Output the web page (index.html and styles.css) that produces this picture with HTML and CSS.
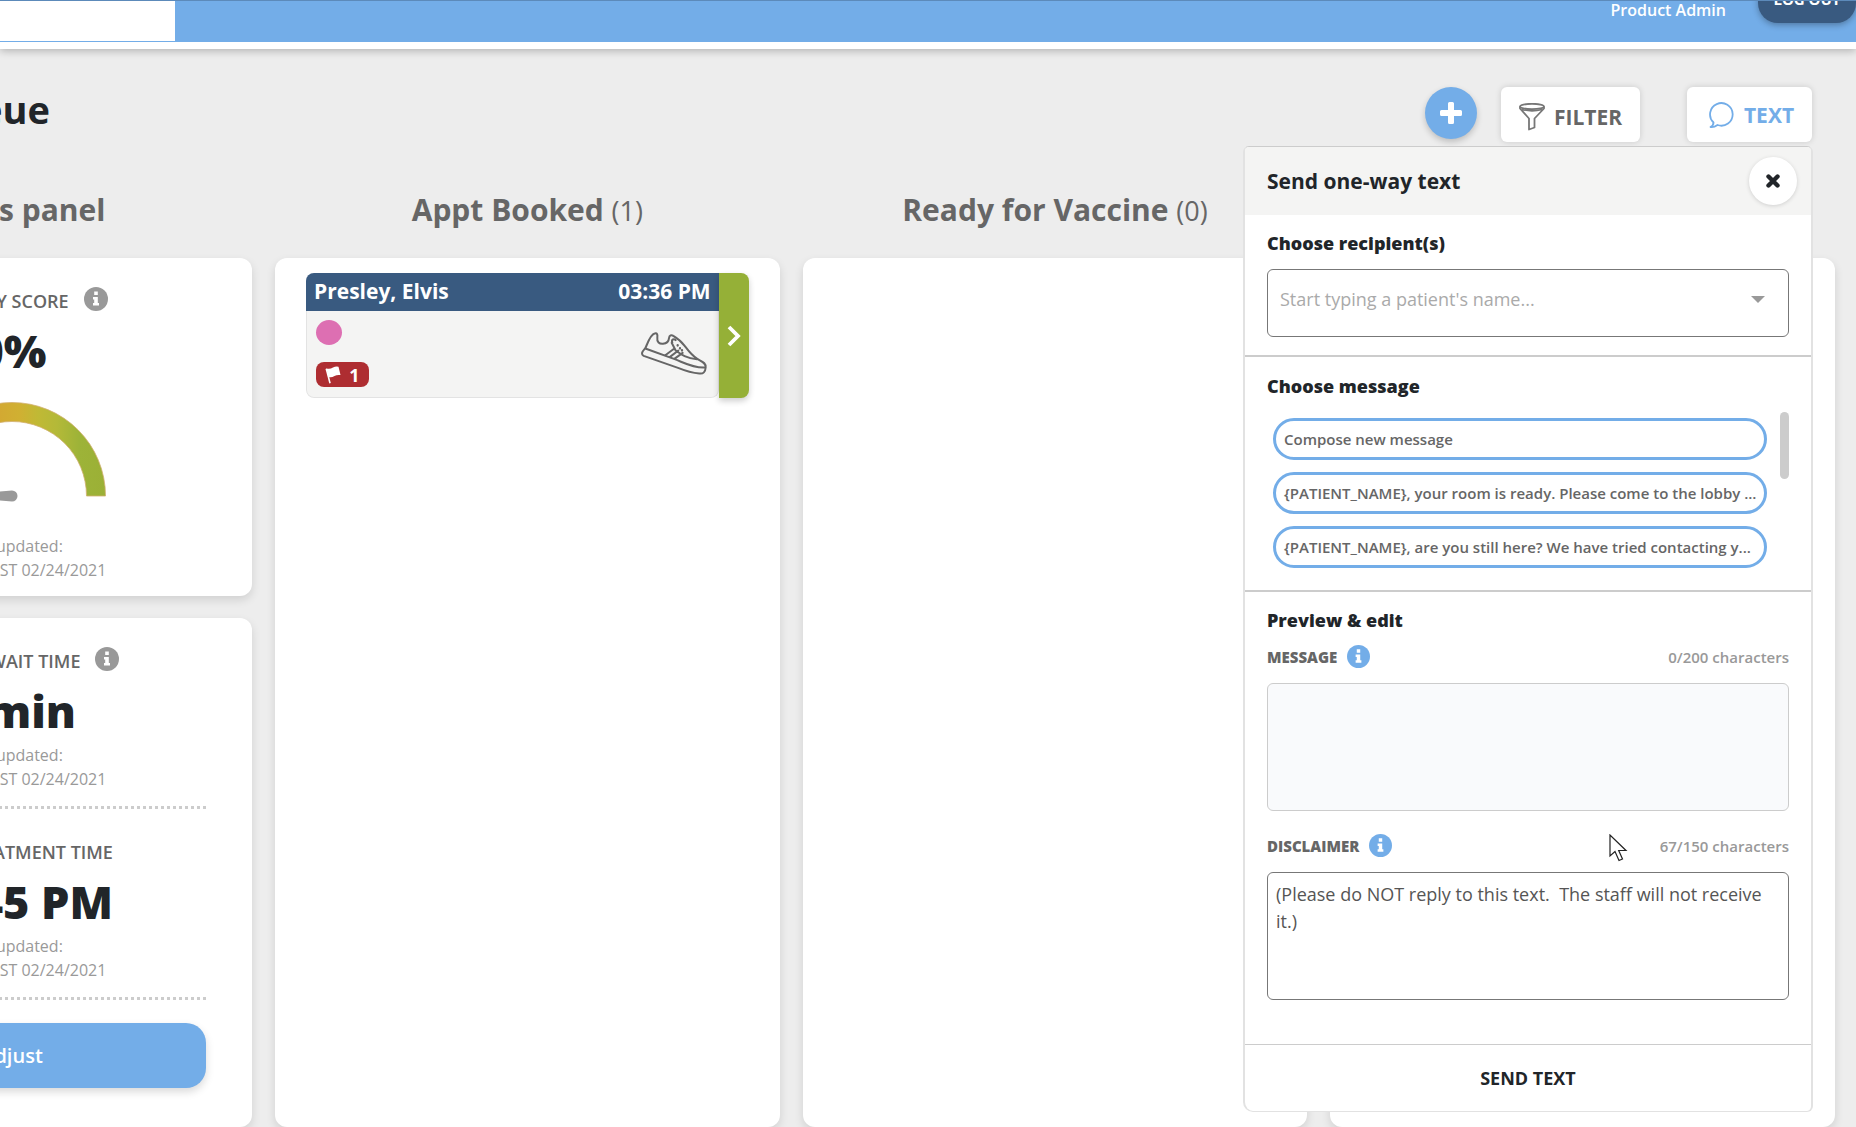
FILE: index.html
```html
<!DOCTYPE html>
<html lang="en">
<head>
	<meta charset="UTF-8">
	<meta name="viewport" content="width=device-width, initial-scale=1.0">
	<title>Queue</title>
	<link rel="stylesheet" href="styles.css">
</head>
<body>
	<header class="header">
		<div class="header-bar">
			<div class="header-logo"></div>
			<span class="header-user">Product Admin</span>
			<button type="button" class="btn-logout">LOG OUT</button>
		</div>
	</header>

	<main class="main">
		<div class="toolbar">
			<h1 class="page-title">Queue</h1>
			<button type="button" class="btn-add" aria-label="Add">
				<svg width="22" height="22" viewBox="0 0 22 22"><path d="M8 1.5Q8 0 9.500 0H12.500Q14 0 14 1.500V8H20.500Q22 8 22 9.500V12.500Q22 14 20.500 14H14V20.500Q14 22 12.500 22H9.500Q8 22 8 20.500V14H1.500Q0 14 0 12.500V9.500Q0 8 1.500 8H8Z" fill="#fff"/></svg>
			</button>
			<button type="button" class="btn-tool btn-filter">
				<svg width="26" height="28" viewBox="0 0 26 28" fill="none" stroke="#777" stroke-width="1.800" stroke-linejoin="round"><ellipse cx="13" cy="3.500" rx="12" ry="2.700"/><path d="M1 3.500V5.500L10 15.500V26.500L15.500 24.500V15.500L25 5.500V3.500M3 6.500Q13 9 23 6.500"/></svg>
				FILTER
			</button>
			<div class="text-wrap">
				<button type="button" class="btn-tool btn-text">
					<svg width="25" height="26" viewBox="0 0 25 26" fill="none" stroke="#73ade8" stroke-width="1.800" stroke-linejoin="round"><path d="M4.500 20.500A11.300 11.300 0 1 1 8.500 23Q5 25.500 1.500 25Q4.500 23.500 4.500 20.500Z"/></svg>
					TEXT
				</button>

				<form class="popup">
					<div class="popup-header">
						<h2 class="popup-title">Send one-way text</h2>
						<button type="button" class="btn-close" aria-label="Close">
							<svg width="14" height="14" viewBox="0 0 14 14"><path d="M2.500 2.500L11.500 11.500M11.500 2.500L2.500 11.500" stroke="#212529" stroke-width="4.400" stroke-linecap="round"/></svg>
						</button>
					</div>
					<div class="popup-section section-recipient">
						<label class="popup-subtitle" for="recipient">Choose recipient(s)</label>
						<div class="select-box">
							<input type="text" class="input-recipient" id="recipient" placeholder="Start typing a patient's name...">
							<svg width="14" height="7" viewBox="0 0 14 7"><path d="M0 0H14L7 7Z" fill="#999"/></svg>
						</div>
					</div>
					<div class="popup-section section-message">
						<h3 class="popup-subtitle">Choose message</h3>
						<div class="message-wrap">
							<ul class="list-message">
								<li><button type="button" class="btn-message">Compose new message</button></li>
								<li><button type="button" class="btn-message">{PATIENT_NAME}, your room is ready. Please come to the lobby ...</button></li>
								<li><button type="button" class="btn-message">{PATIENT_NAME}, are you still here? We have tried contacting y...</button></li>
							</ul>
							<div class="scroll-thumb"></div>
						</div>
					</div>
					<div class="popup-section section-edit">
						<h3 class="popup-subtitle">Preview &amp; edit</h3>
						<div class="field-head">
							<label for="message">MESSAGE</label>
							<svg class="icon-info blue" viewBox="0 0 24 24"><circle cx="12" cy="12" r="12"/><path d="M10.200 4.500H13.800V8H10.200ZM9 10H13.800V16H15V18.500H9V16H10.200V12.500H9Z" fill="#fff"/></svg>
							<span class="count">0/200 characters</span>
						</div>
						<textarea class="text-area" id="message" disabled></textarea>
						<div class="field-head">
							<label for="disclaimer">DISCLAIMER</label>
							<svg class="icon-info blue" viewBox="0 0 24 24"><circle cx="12" cy="12" r="12"/><path d="M10.200 4.500H13.800V8H10.200ZM9 10H13.800V16H15V18.500H9V16H10.200V12.500H9Z" fill="#fff"/></svg>
							<span class="count">67/150 characters</span>
						</div>
						<textarea class="text-area" id="disclaimer">(Please do NOT reply to this text.  The staff will not receive it.)</textarea>
					</div>
					<button type="button" class="btn-send">SEND TEXT</button>
					<svg class="cursor" width="20" height="30" viewBox="0 0 20 30"><path d="M1 1V22L6 17.500L10 26.500L13.500 25L9.700 16.500H17Z" fill="#fff" stroke="#222" stroke-width="1.200"/></svg>
				</form>
			</div>
		</div>

		<div class="board">
			<section class="column">
				<h2 class="column-title">Status panel</h2>
				<div class="box box-score">
					<div class="label">RECOVERY SCORE
						<svg class="icon-info" viewBox="0 0 24 24"><circle cx="12" cy="12" r="12"/><path d="M10.200 4.500H13.800V8H10.200ZM9 10H13.800V16H15V18.500H9V16H10.200V12.500H9Z" fill="#fff"/></svg>
					</div>
					<div class="value">0%</div>
					<svg class="gauge" width="188" height="102" viewBox="0 0 188 102">
						<defs>
							<linearGradient id="gauge-fill">
								<stop offset="0" stop-color="#ae2d31"/>
								<stop offset=".42" stop-color="#d3a832"/>
								<stop offset=".54" stop-color="#d0b032"/>
								<stop offset=".64" stop-color="#c0b935"/>
								<stop offset=".74" stop-color="#b4b938"/>
								<stop offset=".86" stop-color="#9db338"/>
								<stop offset="1" stop-color="#9bb036"/>
							</linearGradient>
						</defs>
						<path d="M.500 94A93.500 93.500 0 0 1 187.500 94H168.500A74.500 74.500 0 0 0 19.500 94Z" fill="url(#gauge-fill)" stroke="#d2b070" stroke-width=".800"/>
						<path d="M30 94L94 88.500A5.500 5.500 0 0 1 94 99.500Z" fill="#999"/>
					</svg>
					<p class="updated">Last updated:<br>03:36 PM EST 02/24/2021</p>
				</div>
				<div class="box box-time">
					<div class="label">AVERAGE WAIT TIME
						<svg class="icon-info" viewBox="0 0 24 24"><circle cx="12" cy="12" r="12"/><path d="M10.200 4.500H13.800V8H10.200ZM9 10H13.800V16H15V18.500H9V16H10.200V12.500H9Z" fill="#fff"/></svg>
					</div>
					<div class="value">0 min</div>
					<p class="updated">Last updated:<br>03:36 PM EST 02/24/2021</p>
					<div class="dots"></div>
					<div class="label">NEXT TREATMENT TIME</div>
					<div class="value">03:45 PM</div>
					<p class="updated">Last updated:<br>03:36 PM EST 02/24/2021</p>
					<div class="dots"></div>
					<button type="button" class="btn-adjust">Adjust</button>
				</div>
			</section>

			<section class="column">
				<h2 class="column-title">Appt Booked <span>(1)</span></h2>
				<div class="box box-list">
					<article class="patient">
						<div class="patient-info">
							<div class="patient-head"><span>Presley, Elvis</span><time>03:36 PM</time></div>
							<div class="patient-body">
								<div class="patient-tags">
									<span class="dot"></span>
									<span class="flag">
										<svg width="16" height="18" viewBox="0 0 16 18" fill="#fff"><path d="M.500 3L2 2.500L5.800 17L4.300 17.400Z"/><path d="M1.500 2.500Q5 3.500 8 1.500Q11 0 13.500 .800L15.500 9Q12 8.500 9.500 10Q6.500 12 3.500 11Z"/></svg>
										1
									</span>
								</div>
								<svg class="shoe" width="70" height="47" viewBox="1110 450 210 140" fill="none" stroke="#666" stroke-width="6" stroke-linejoin="round" stroke-linecap="round">
									<path d="M1130 502C1136 488 1145 462 1157 460C1165 458 1166 464 1165 471C1163 486 1171 492 1182 491C1193 490 1199 485 1200 474C1201 465 1207 463 1213 467C1231 478 1239 486 1247 497C1259 513 1268 526 1285 536C1297 544 1312 547 1310 562C1309 575 1303 582 1291 580C1268 578 1247 571 1227 563L1124 527C1118 524 1118 519 1121 514Z"/>
									<path d="M1129 505L1217 537C1246 548 1273 564 1307 562M1188 526L1216 505M1202 531L1228 511M1216 536L1241 518M1208 488L1220 511C1235 522 1251 535 1284 537M1210 488C1206 477 1215 475 1220 480"/>
									<path d="M1226 495V496M1233 504V505M1239 510V511" stroke-width="7"/>
								</svg>
							</div>
						</div>
						<button type="button" class="btn-next" aria-label="Next">
							<svg width="14" height="22" viewBox="0 0 14 22" fill="none" stroke="#fff" stroke-width="3.800"><path d="M2 2L11 11L2 20"/></svg>
						</button>
					</article>
				</div>
			</section>

			<section class="column">
				<h2 class="column-title">Ready for Vaccine <span>(0)</span></h2>
				<div class="box box-list"></div>
			</section>

			<section class="column last">
				<div class="box box-list"></div>
			</section>
		</div>
	</main>
</body>
</html>
```
FILE: styles.css
```css
*{ box-sizing: border-box;}
body{
	margin: 0; min-height: 100vh; background-color: #ededed; color: #212529;
	font-family: 'Open Sans', sans-serif; overflow: hidden;
	display: flex; flex-direction: column;
}
h1, h2, h3, p, ul{ margin: 0; padding: 0;}
ul{ list-style: none;}
button, input, textarea{ font-family: inherit; margin: 0;}
button{ border: 0; padding: 0; cursor: pointer;}
svg{ display: block; flex: none;}

/* header */
.header{
	background-color: #fff; padding-bottom: 7px; box-shadow: 0 2px 8px rgba(0,0,0,.25);
	position: relative;
}
.header-bar{
	height: 42px; background-color: #73ade8; border-top: 1px solid #5c8aba; overflow: hidden;
	display: flex; align-items: flex-end;
}
.header-logo{ width: 175px; height: 40px; background-color: #fff; margin-bottom: 1px;}
.header-user{
	margin-left: auto; margin-right: 32px; padding-bottom: 20px;
	font-size: 16px; line-height: 24px; font-weight: 600; color: #fff;
}
.btn-logout{
	width: 98px; height: 48px; margin-bottom: 19px; border-radius: 20px;
	background-color: #395a80; color: #fff; font-size: 15px; font-weight: 700; line-height: 24px;
	box-shadow: 0 2px 6px rgba(0,0,0,.3);
}

/* toolbar */
.main{ flex: 1; display: flex; flex-direction: column;}
.toolbar{
	display: flex; align-items: flex-start; padding: 38px 44px 0 0; height: 137px;
}
.page-title{
	width: 50px; display: flex; justify-content: flex-end;
	font-size: 38px; line-height: 44px; font-weight: 700;
}
.btn-add{
	width: 52px; height: 52px; border-radius: 50%; background-color: #73ade8;
	margin-left: auto; margin-right: 24px;
	display: flex; align-items: center; justify-content: center;
	box-shadow: 0 3px 6px rgba(0,0,0,.2);
}
.btn-tool{
	height: 55px; border-radius: 6px; background-color: #fff; color: #666;
	display: flex; align-items: center; justify-content: center;
	font-size: 21px; line-height: 28px; font-weight: 700;
	box-shadow: 0 0 6px rgba(0,0,0,.15);
}
.btn-filter{ width: 139px; margin-right: 47px; gap: 9px; padding-top: 4px;}
.btn-text{ width: 125px; color: #73ade8; gap: 10px; padding-left: 4px;}
.text-wrap{ position: relative;}

/* columns */
.board{
	flex: 1; display: grid; grid-template-columns: 480px 1fr 1fr 1fr; gap: 23px;
	margin: 0 21px 0 -228px;
}
.column{ display: flex; flex-direction: column;}
.column-title{
	height: 72px; padding-top: 4px; text-align: center; color: #666;
	font-size: 30px; line-height: 40px; font-weight: 700;
}
.column-title span{ font-size: 27px; font-weight: 400;}
.column.last{ padding-top: 72px;}
.box{
	background-color: #fff; border-radius: 12px; box-shadow: 0 4px 10px rgba(0,0,0,.12);
}
.box-list{ flex: 1; padding: 15px 31px;}
.box-score{ height: 338px; margin-bottom: 22px; padding: 31px 46px 0;}
.box-time{ flex: 1; padding: 31px 46px 0;}
.label{
	display: flex; justify-content: center; gap: 15px; height: 24px;
	font-size: 18px; line-height: 24px; font-weight: 600; color: #666;
}
.icon-info{ width: 24px; height: 24px; fill: #999; margin-top: -2px;}
.icon-info.blue{ width: 23px; height: 23px; fill: #73ade8;}
.value{
	height: 70px; padding-top: 10px; text-align: center; white-space: nowrap;
	font-size: 45px; line-height: 55px; font-weight: 800;
}
.updated{ text-align: center; font-size: 16px; line-height: 24px; color: #999;}
.gauge{ margin: 19px auto 30px;}
.dots{
	height: 3px; margin: 15px 0 31px;
	background: repeating-linear-gradient(to left, #ccc 0 3px, transparent 3px 6px);
}
.btn-adjust{
	display: block; width: 100%; height: 65px; border-radius: 20px; margin-top: -8px;
	background-color: #73ade8; color: #fff; font-size: 20px; font-weight: 600;
	box-shadow: 0 4px 8px rgba(0,0,0,.15);
}

/* patient card */
.patient{ display: flex; height: 125px;}
.patient-info{
	flex: 1; border-radius: 8px 0 8px 8px; background-color: #f4f4f3; overflow: hidden;
	display: flex; flex-direction: column;
}
.patient-head{
	height: 38px; padding: 0 8px; background-color: #395a80; color: #fff;
	display: flex; justify-content: space-between;
	font-size: 21px; line-height: 36px; font-weight: 700;
}
.patient-body{
	flex: 1; padding: 9px 9px 0; border: 1px solid #e3e3e3; border-top: 0; border-radius: 0 0 8px 8px;
	display: flex; justify-content: space-between;
}
.dot{
	display: block; width: 26px; height: 25px; border-radius: 50%; background-color: #dd6fb2;
}
.flag{
	display: flex; align-items: center; justify-content: center; gap: 8px;
	width: 53px; height: 25px; margin-top: 17px; border-radius: 8px;
	background-color: #ae2d31; color: #fff; font-size: 18px; line-height: 24px; font-weight: 700;
}
.shoe{ margin-top: 10px;}
.btn-next{
	width: 30px; background-color: #95b037; border-radius: 0 8px 8px 0;
	display: flex; align-items: center; justify-content: center;
	box-shadow: 0 3px 6px rgba(0,0,0,.2);
}

/* text popup */
.popup{
	position: absolute; top: 59px; right: -1px; width: 570px; z-index: 1;
	background-color: #fff; border: 2px solid #e2e2e2; border-top: 1px solid #ccc;
	border-bottom-width: 1px; border-radius: 6px 6px 6px 10px;
}
.popup-header{
	height: 68px; padding: 0 14px 0 22px; background-color: #f4f4f3; border-radius: 4px 4px 0 0;
	display: flex; align-items: center; justify-content: space-between;
}
.popup-title{ font-size: 21px; line-height: 28px; font-weight: 700;}
.btn-close{
	width: 48px; height: 48px; border-radius: 50%; background-color: #fff;
	display: flex; align-items: center; justify-content: center;
	box-shadow: 0 1px 4px rgba(0,0,0,.15);
}
.popup-section{ padding: 0 22px; border-bottom: 2px solid #ccc;}
.popup-subtitle{ display: block; font-size: 18px; line-height: 24px; font-weight: 800;}
.section-recipient{ height: 142px; padding-top: 16px;}
.select-box{
	height: 68px; margin-top: 14px; padding: 0 23px 8px 12px; border: 1px solid #777; border-radius: 6px;
	display: flex; align-items: center;
}
.input-recipient{
	flex: 1; border: 0; outline: 0; padding: 0; background: none; font-size: 18px; line-height: 24px;
}
.input-recipient::placeholder{ color: #aaa;}
.section-message{ height: 235px; padding-top: 17px;}
.message-wrap{ display: flex; justify-content: space-between; margin-top: 14px;}
.list-message{ flex: 1; padding: 6px 13px 0 6px;}
.btn-message{
	display: block; width: 100%; height: 42px; margin-bottom: 12px; padding: 0 8px;
	border: 3px solid #73ade8; border-radius: 21px; background-color: #fff; color: #666;
	font-size: 15px; line-height: 24px; font-weight: 600; text-align: left;
	white-space: nowrap; overflow: hidden;
}
.scroll-thumb{ width: 9px; height: 67px; border-radius: 5px; background-color: #ccc;}
.section-edit{ height: 453px; padding-top: 16px; border-bottom-width: 1px;}
.field-head{
	display: flex; align-items: center; gap: 10px; height: 24px; margin-top: 13px;
	font-size: 15px; line-height: 24px; color: #666;
}
.field-head label{ font-weight: 800;}
.count{ margin-left: auto; color: #999; font-weight: 600;}
.text-area{
	display: block; width: 100%; height: 128px; margin-top: 14px; padding: 8px;
	border: 1px solid #777; border-radius: 6px; outline: 0; resize: none; overflow: hidden;
	color: #555; font-size: 18px; line-height: 27px;
}
.text-area:disabled{ background-color: #f9fafc; border-color: #ccc;}
.text-area + .field-head{ margin-top: 23px;}
.btn-send{
	display: block; width: 100%; height: 66px; background: none;
	font-size: 18px; line-height: 24px; font-weight: 700; color: #212529;
}
.cursor{ position: absolute; top: 687px; left: 364px;}
```
